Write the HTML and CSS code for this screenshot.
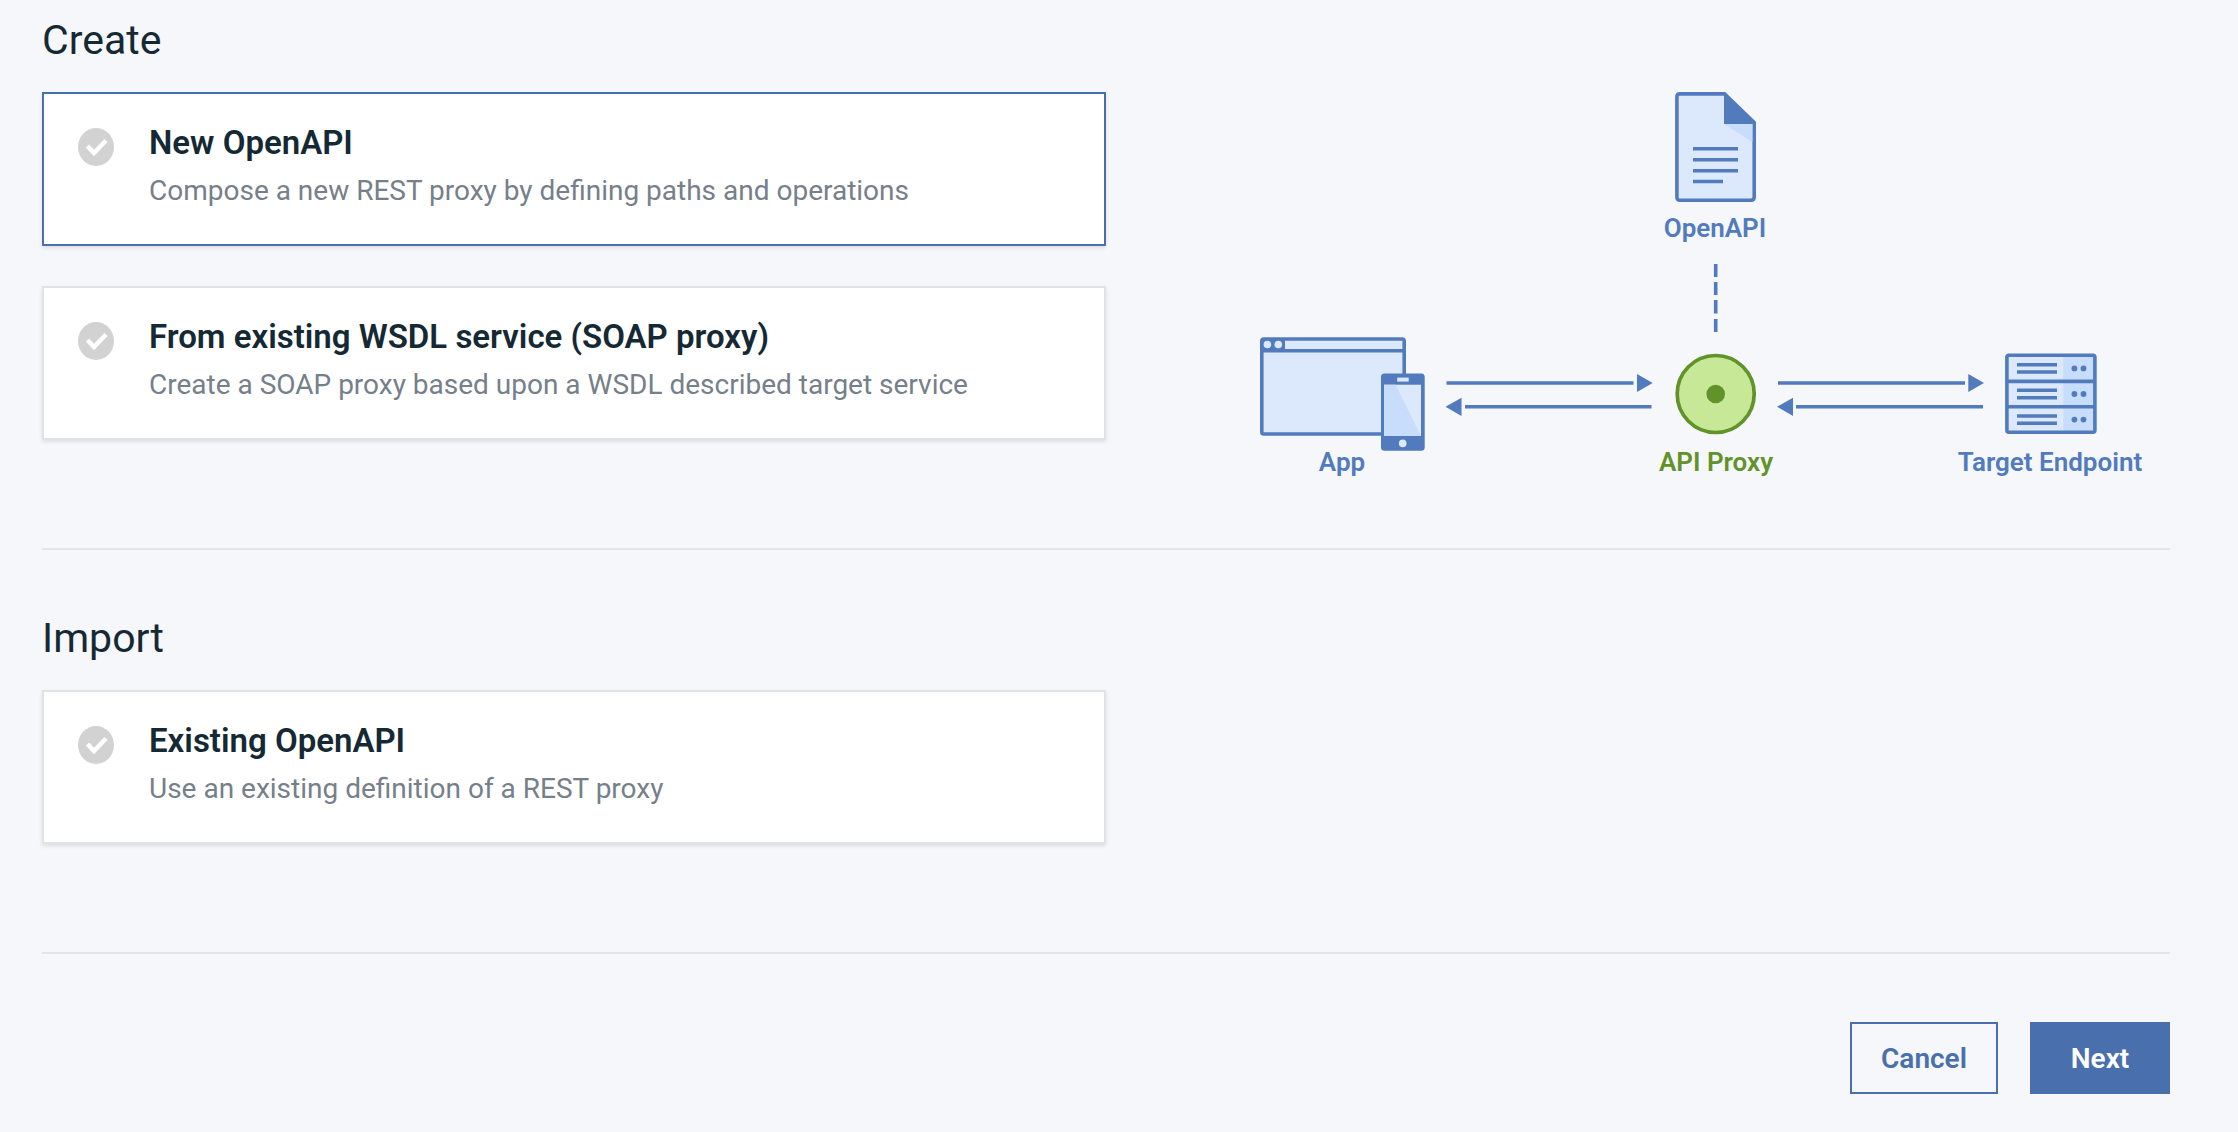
FILE: index.html
```
<!DOCTYPE html>
<html lang="en">
<head>
  <meta charset="utf-8">
  <meta name="viewport" content="width=device-width, initial-scale=1">
  <title>Create API proxy</title>
  <link rel="stylesheet" href="styles.css">
</head>
<body>
  <form class="wizard">
    <section class="group">
      <div class="choices">
        <h2 class="group-title">Create</h2>
        <div class="cards">
          <label class="card card-active">
            <span class="check">
              <input class="check-input" type="radio" name="source" value="new-openapi">
              <svg class="check-mark" viewBox="0 0 36 38" aria-hidden="true"><path d="M9.500 18L16 25L28 12.500"/></svg>
            </span>
            <span class="card-text">
              <span class="card-title">New OpenAPI</span>
              <span class="card-desc">Compose a new REST proxy by defining paths and operations</span>
            </span>
          </label>
          <label class="card">
            <span class="check">
              <input class="check-input" type="radio" name="source" value="wsdl">
              <svg class="check-mark" viewBox="0 0 36 38" aria-hidden="true"><path d="M9.500 18L16 25L28 12.500"/></svg>
            </span>
            <span class="card-text">
              <span class="card-title">From existing WSDL service (SOAP proxy)</span>
              <span class="card-desc">Create a SOAP proxy based upon a WSDL described target service</span>
            </span>
          </label>
        </div>
      </div>

      <svg class="diagram" viewBox="0 0 1064 348" role="img" aria-label="App, API Proxy, Target Endpoint and OpenAPI">
        <!-- OpenAPI document -->
        <g transform="translate(569 0)">
          <path class="pale line" d="M4.800 1.900H49.500L79.200 30.500V105Q79.200 108.200 76 108.200H5Q1.900 108.200 1.900 105V5Q1.900 1.900 4.800 1.900Z"/>
          <path class="mid" d="M49 32H77.400V50Z"/>
          <path class="solid" d="M49 2V32H79V30L50 2Z"/>
          <path class="line" d="M18 56.700H63M18 67.700H63M18 78.700H63M18 89.500H48"/>
        </g>
        <text class="label" x="609" y="145">OpenAPI</text>
        <path class="line" d="M609.700 172V185M609.700 190V203M609.700 208V221.500M609.700 227V240"/>

        <!-- App: browser window with a phone -->
        <g transform="translate(154 245)">
          <rect class="pale line" x="1.800" y="2" width="142.400" height="95" rx="2"/>
          <path class="solid" d="M2 2H25V13.700H2Z"/>
          <path class="line" d="M2 13.700H144"/>
          <circle class="pale" cx="7.400" cy="7.500" r="3.800"/>
          <circle class="pale" cx="18.300" cy="7.500" r="3.800"/>
          <rect class="solid" x="121" y="36.500" width="43.700" height="77.200" rx="3.500"/>
          <rect class="pale" x="124" y="47.700" width="37" height="51.300"/>
          <path class="mid" d="M124 47.700H135.500L161 99H124Z"/>
          <rect class="pale" x="137.200" y="40.600" width="11.500" height="4"/>
          <circle class="pale" cx="142.700" cy="106.400" r="3.800"/>
        </g>
        <text class="label" x="236" y="379">App</text>

        <!-- App to proxy -->
        <g transform="translate(339 282)">
          <path class="line" d="M1.500 9H188.500M20 32.700H206.500"/>
          <path class="solid" d="M192 0L207.700 9L192 18ZM16.500 23.700L.5 32.700L16.500 42Z"/>
        </g>

        <!-- API proxy -->
        <circle class="proxy-ring" cx="609.700" cy="302" r="38.500"/>
        <circle class="proxy-dot" cx="609.700" cy="302" r="9.300"/>
        <text class="label label-proxy" x="610" y="379">API Proxy</text>

        <!-- Proxy to target -->
        <g transform="translate(670 282)">
          <path class="line" d="M2 9H189M20 32.700H207"/>
          <path class="solid" d="M192.300 0L208 9L192.300 18ZM17 23.700L1 32.700L17 42Z"/>
        </g>

        <!-- Target server -->
        <g transform="translate(899 261)">
          <rect class="pale" x="2" y="2" width="88" height="77"/>
          <rect class="mid" x="58.300" y="2" width="31" height="77"/>
          <rect class="line" x="1.900" y="2.300" width="88" height="77" rx="2"/>
          <path class="line" d="M2 28.400H90M2 53.700H90"/>
          <path class="line" d="M12 11.700H52M12 19H52M12 37.300H52M12 44.700H52M12 63H52M12 70.200H52"/>
          <g class="solid">
            <circle cx="69.400" cy="15.400" r="2.900"/><circle cx="78.500" cy="15.400" r="2.900"/>
            <circle cx="69.400" cy="41" r="2.900"/><circle cx="78.500" cy="41" r="2.900"/>
            <circle cx="69.400" cy="66.600" r="2.900"/><circle cx="78.500" cy="66.600" r="2.900"/>
          </g>
        </g>
        <text class="label" x="944" y="379">Target Endpoint</text>
      </svg>
    </section>

    <section class="group">
      <div class="choices">
        <h2 class="group-title">Import</h2>
        <div class="cards">
          <label class="card">
            <span class="check">
              <input class="check-input" type="radio" name="source" value="existing-openapi">
              <svg class="check-mark" viewBox="0 0 36 38" aria-hidden="true"><path d="M9.500 18L16 25L28 12.500"/></svg>
            </span>
            <span class="card-text">
              <span class="card-title">Existing OpenAPI</span>
              <span class="card-desc">Use an existing definition of a REST proxy</span>
            </span>
          </label>
        </div>
      </div>
    </section>

    <div class="actions">
      <button class="button button-outline" type="button">Cancel</button>
      <button class="button" type="submit">Next</button>
    </div>
  </form>
</body>
</html>
```
FILE: styles.css
```
* {
  box-sizing: border-box;
}

body {
  margin: 0;
  background: #f5f7fb;
  color: #152934;
  font-family: Roboto, "Open Sans", sans-serif;
}

.wizard {
  padding: 16px 68px 38px 42px;
}

.group {
  display: grid;
  grid-template-columns: 1fr 1fr;
  align-items: start;
  padding-bottom: 108px;
  border-bottom: 2px solid #e1e4e8;
}

.group + .group {
  padding-top: 64px;
}

.group-title {
  margin: 0 0 28px;
  font-size: 41px;
  line-height: 48px;
  font-weight: 400;
}

.cards {
  display: grid;
  gap: 40px;
}

.card {
  display: flex;
  align-items: flex-start;
  gap: 35px;
  padding: 26px 34px 30px;
  border: 2px solid #dfe3e6;
  background: #fff;
  box-shadow: 0 2px 4px rgba(0, 0, 0, 0.1);
  cursor: pointer;
}

.card-active {
  border-color: #4a6fad;
}

.check {
  display: grid;
  flex: none;
  width: 36px;
  margin-top: 8px;
}

.check-input,
.check-mark {
  grid-area: 1 / 1;
  width: 36px;
  height: 38px;
}

.check-input {
  appearance: none;
  margin: 0;
  border-radius: 50%;
  background: #d2d2d2;
}

.check-mark {
  fill: none;
  stroke: #fff;
  stroke-width: 4.6px;
  pointer-events: none;
}

.card-text {
  display: grid;
  gap: 2px;
}

.card-title {
  font-size: 33px;
  line-height: 46px;
  font-weight: 600;
}

.card-desc {
  color: #75808a;
  font-size: 28px;
  line-height: 46px;
}

/* The bottom labels run below the viewBox, into the group's padding. */
.diagram {
  width: 100%;
  margin-top: 76px;
  overflow: visible;
}

.line {
  fill: none;
  stroke: #527bbd;
  stroke-width: 3.6px;
}

.solid {
  fill: #527bbd;
}

.pale {
  fill: #dce9fd;
}

.mid {
  fill: #c8dcfb;
}

.proxy-ring {
  fill: #c7e897;
  stroke: #61932a;
  stroke-width: 3.7px;
}

.proxy-dot {
  fill: #61932a;
}

.label {
  fill: #527bbd;
  font-size: 26px;
  font-weight: 600;
  text-anchor: middle;
}

.label-proxy {
  fill: #61932a;
}

.actions {
  display: flex;
  justify-content: flex-end;
  gap: 32px;
  padding-top: 68px;
}

.button {
  min-width: 140px;
  height: 72px;
  padding: 0 28px;
  border: 2px solid #4a6fad;
  background: #4a6fad;
  color: #fff;
  font-family: inherit;
  font-size: 28px;
  font-weight: 600;
  cursor: pointer;
}

.button-outline {
  min-width: 148px;
  background: transparent;
  color: #4a6fad;
}
```
